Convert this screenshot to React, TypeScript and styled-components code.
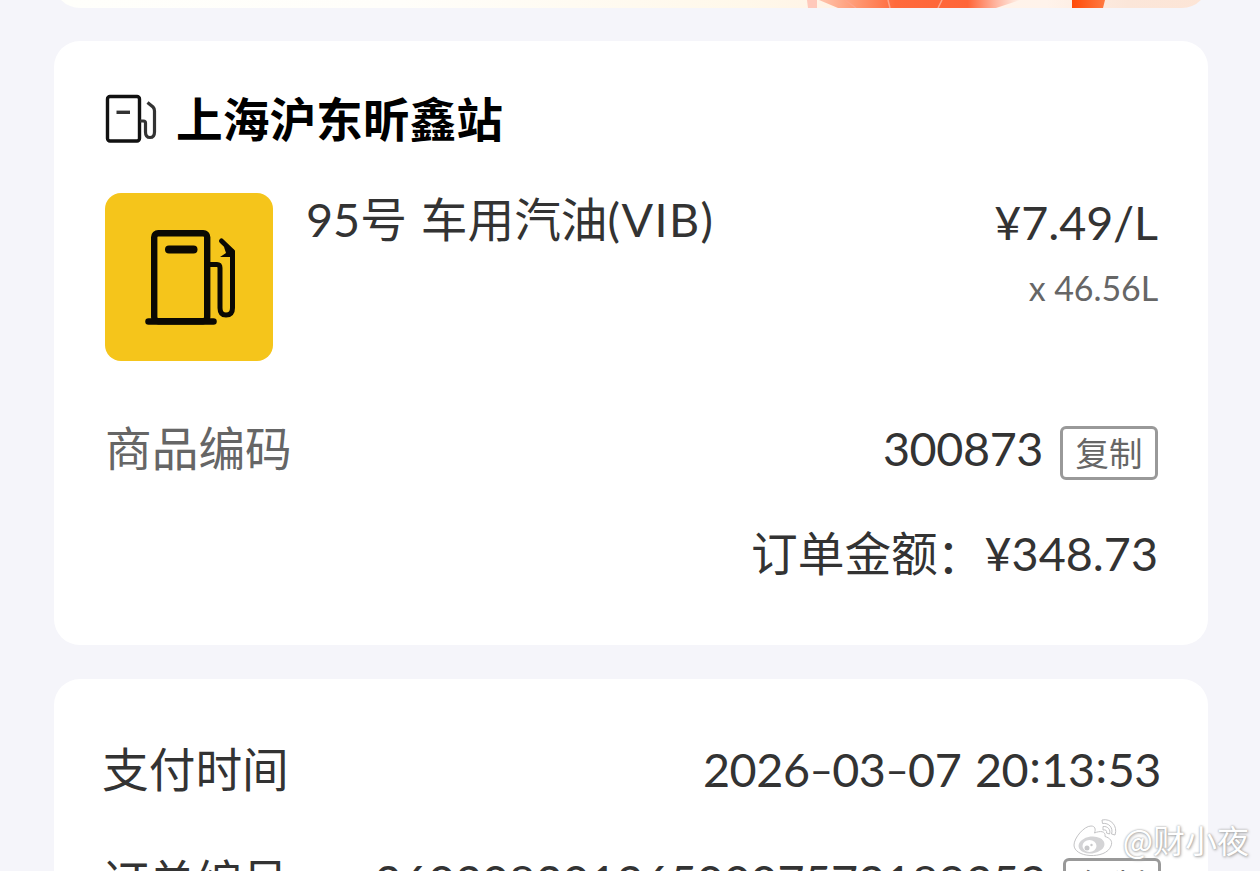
import React from 'react';
import styled, { createGlobalStyle } from 'styled-components';

const GlobalStyle = createGlobalStyle`
    * {
        box-sizing: border-box;
    }
    body {
        margin: 0;
        background-color: #f5f5fa;
        font-family: Lato, "Noto Sans CJK SC", sans-serif;
        color: #333333;
    }
`

function StationIcon() {
    return (
        <svg width="52" height="50" viewBox="0 0 52 50" fill="none" stroke="#111" strokeWidth="3.4">
            <rect x="2.5" y="2.5" width="32" height="44.5" rx="2.5"/>
            <path d="M11.5 18.300H25" stroke="#333"/>
            <path d="M35 27H38.5Q40.5 27 40.5 29V38Q40.5 43.5 45 43.5Q49.5 43.5 49.5 38V17Q49.5 14.5 48 13L42.5 8.5" strokeWidth="3.2" stroke="#333"/>
        </svg>
    )
}

function PumpIcon() {
    return (
        <svg width="168" height="168" viewBox="0 0 168 168" fill="none" stroke="#0b0903">
            <rect x="49.2" y="40.2" width="53" height="88" rx="4" strokeWidth="6.4"/>
            <path d="M43.500 128.500H108.500" strokeWidth="6.5" strokeLinecap="round"/>
            <path d="M64 56.5H88.5" strokeWidth="8" strokeLinecap="round"/>
            <path d="M104 71.5H112Q115 71.5 115 75V115Q115 122 121 122Q127.500 122 127.500 115V59" strokeWidth="5"/>
            <path d="M116.500 48L127.500 58.500" strokeWidth="5" strokeLinecap="round"/>
            <path d="M119 54L129.500 57V64H115L121 60Z" fill="#0b0903" stroke="none"/>
        </svg>
    )
}

function BannerArt() {
    return (
        <svg width="410" height="8" viewBox="0 0 410 8">
            <defs>
                <linearGradient id="petal">
                    <stop offset="0" stopColor="#ffc5ae"/>
                    <stop offset="0.18" stopColor="#ff9a74"/>
                    <stop offset="0.38" stopColor="#ff6a3c"/>
                    <stop offset="0.74" stopColor="#ff6538"/>
                    <stop offset="0.88" stopColor="#ffb5a0"/>
                    <stop offset="1" stopColor="#fff1e8"/>
                </linearGradient>
                <linearGradient id="stem">
                    <stop offset="0" stopColor="#ff4a08"/>
                    <stop offset="1" stopColor="#ff7a42"/>
                </linearGradient>
            </defs>
            <path d="M9 0H19V8H10Z" fill="#ffc9bb"/>
            <path d="M21 0H222L198 8H40Z" fill="url(#petal)"/>
            <path d="M47 0L58 8M90 0L92 8M144 0L140 8" stroke="#ffa489" strokeWidth="1.5" fill="none"/>
            <path d="M274 0H307L305 8H274Z" fill="url(#stem)"/>
        </svg>
    )
}

function WeiboLogo() {
    return (
        <svg width="48" height="42" viewBox="0 0 48 42" fill="none">
            <g stroke="#c4c4c6" strokeWidth="1" fill="#fff">
                <path d="M3 27C3 20 13 8 20 8C24 8 25 11 23.500 15C29 12.500 35 13 34 18.500C39 20 42 23 40 28C37.500 35 28 38 19 37.500C10 37 3 33 3 27Z"/>
                <path d="M31 2C40 0 47 8 44 17L40.500 16C42.500 10 38 4.500 31.500 5.500Z"/>
                <path d="M32 8.500C37 8 40 12 38.500 16L35.500 15C36 12.500 35 11.500 32 12Z"/>
            </g>
            <ellipse cx="20.500" cy="27" rx="13" ry="8.500" fill="#d4d4d6" transform="rotate(-7 20.500 27)"/>
            <ellipse cx="18.500" cy="28" rx="7" ry="6" fill="#fff"/>
            <circle cx="16" cy="30" r="2.500" fill="#c8c8ca"/>
            <circle cx="20.500" cy="27" r="1.200" fill="#c8c8ca"/>
        </svg>
    )
}

function App() {
    return (
        <Page>
            <GlobalStyle/>
            <Banner><BannerArt/></Banner>
            <OrderCard>
                <StationRow>
                    <StationIcon/>
                    <StationName>上海沪东昕鑫站</StationName>
                </StationRow>
                <ProductRow>
                    <Thumb><PumpIcon/></Thumb>
                    <ProductName>95号 车用汽油<Grade>(VIB)</Grade></ProductName>
                    <PriceColumn>
                        <Price>¥7.49/L</Price>
                        <Quantity>x 46.56L</Quantity>
                    </PriceColumn>
                </ProductRow>
                <CodeRow>
                    <Label $muted>商品编码</Label>
                    <Digits $spacing={-0.4}>300873</Digits>
                    <CopyButton>复制</CopyButton>
                </CodeRow>
                <TotalRow>
                    <span>订单金额<WideColon>：</WideColon></span>
                    <Digits $spacing={0}>¥348.73</Digits>
                </TotalRow>
            </OrderCard>
            <PaymentCard>
                <InfoRow>
                    <Label>支付时间</Label>
                    <Time>2026<Dash>–</Dash>03<Dash>–</Dash>07 20<Colon>:</Colon>13<Colon>:</Colon>53</Time>
                </InfoRow>
                <InfoRow>
                    <Label>订单编号</Label>
                    <Digits $spacing={-0.22}>2603082013650007572189353</Digits>
                    <CopyButton>复制</CopyButton>
                </InfoRow>
            </PaymentCard>
            <Watermark>
                <WeiboLogo/>
                <span>@财小夜</span>
            </Watermark>
        </Page>
    )
}

const Page = styled.div`
    position: relative;
    height: 871px;
    padding: 0 52px 0 54px;
    overflow: hidden;
    font-size: 46.700px;
    line-height: 60px;
    white-space: nowrap;
`

const Banner = styled.div`
    display: flex;
    justify-content: flex-end;
    align-items: flex-end;
    height: 60px;
    margin-top: -52.500px;
    border-radius: 26px;
    overflow: hidden;
    background: linear-gradient(90deg, #fffffb 0%, #fffefa 30%, #fff8ea 60%, #fff3e6 68%, #fff3eb 86%, #fbe6d9 93%, #fde5d6 100%);
`

const Card = styled.div`
    border-radius: 26px;
    background-color: white;
`

const OrderCard = styled(Card)`
    height: 603.500px;
    margin-top: 33.500px;
    padding: 49px 50px 0 51px;
`

const PaymentCard = styled(Card)`
    height: 300px;
    margin-top: 34px;
    padding: 60px 47px 0 48px;
`

const StationRow = styled.div`
    display: flex;
    align-items: center;
    gap: 19px;
    height: 58px;
`

const StationName = styled.div`
    font-weight: 700;
    color: #000;
`

const ProductRow = styled.div`
    display: flex;
    align-items: flex-start;
    height: 168px;
    margin-top: 45px;
`

const Thumb = styled.div`
    flex: none;
    width: 168px;
    height: 168px;
    border-radius: 16px;
    overflow: hidden;
    background-color: #f5c51b;
`

const ProductName = styled.div`
    flex: 1;
    margin: -4px 0 0 33px;
    word-spacing: 2px;
`

const Grade = styled.span`
    letter-spacing: 1.400px;
`

const PriceColumn = styled.div`
    display: flex;
    flex-direction: column;
    align-items: flex-end;
    margin-top: -1px;
`

const Price = styled.div`
    letter-spacing: -0.100px;
`

const Quantity = styled.div`
    margin-top: 12px;
    font-size: 34px;
    line-height: 48px;
    letter-spacing: -0.100px;
    color: #666666;
`

const CodeRow = styled.div`
    display: flex;
    align-items: center;
    height: 60px;
    margin-top: 57px;
`

const Label = styled.div<{ $muted?: boolean }>`
    flex: 1;
    color: ${({ $muted }) => ($muted ? '#666666' : '#333333')};
`

const Digits = styled.div<{ $spacing: number }>`
    letter-spacing: ${({ $spacing }) => $spacing}px;
`

const CopyButton = styled.button`
    flex: none;
    width: 98px;
    height: 54px;
    margin: 9px 0 0 17px;
    padding: 0;
    border: 3px solid #999999;
    border-radius: 6px;
    background: none;
    font-family: inherit;
    font-size: 33.500px;
    line-height: 48px;
    color: #666666;
`

const TotalRow = styled.div`
    display: flex;
    justify-content: flex-end;
    margin-top: 45px;
`

const WideColon = styled.span`
    display: inline-block;
    transform: translate(-1px, 2px);
`

const InfoRow = styled.div`
    display: flex;
    align-items: center;
    height: 60px;
    margin-bottom: 52px;
`

const Time = styled.div`
    letter-spacing: -0.400px;
    word-spacing: 2px;
`

const Dash = styled.span`
    display: inline-block;
    width: 22.500px;
    font-size: 40px;
    line-height: 40px;
    text-align: center;
    transform: translateY(-2px);
`

const Colon = styled.span`
    display: inline-block;
    width: 13px;
    text-align: center;
    transform: translateY(-4px);
`

const Watermark = styled.div`
    position: absolute;
    right: 11px;
    bottom: 8px;
    display: flex;
    align-items: center;
    gap: 4px;
    font-family: "Noto Sans CJK SC", sans-serif;
    font-size: 32px;
    line-height: 48px;
    color: #fff;
    text-shadow: 0 0 2px #999, 1px 1px 3px #aaa;
`

export default App;
